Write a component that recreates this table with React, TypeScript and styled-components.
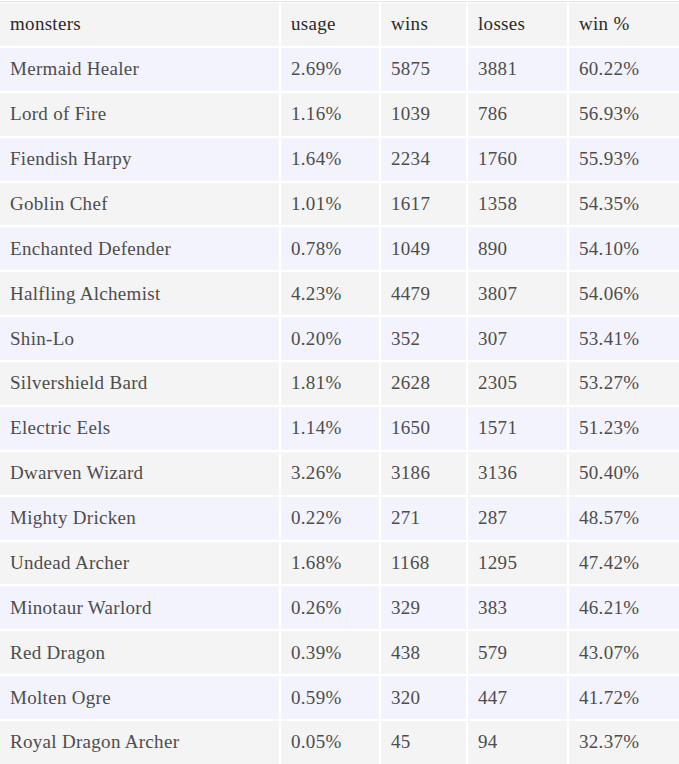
import styled, { createGlobalStyle } from "styled-components";

const GlobalStyle = createGlobalStyle`
  html, body {
    margin: 0;
    padding: 0;
    background: #ffffff;
  }
`;

const Wrapper = styled.div`
  margin-top: 1px;
  border-top: 1px solid #e6e6e6;
  padding-top: 1px;
  width: 679px;
`;

const Table = styled.table`
  width: 679px;
  border-collapse: separate;
  border-spacing: 0;
  table-layout: fixed;
  font-family: "Liberation Serif", "Times New Roman", serif;
  font-size: 19px;
  line-height: 22px;
  letter-spacing: 0.3px;
`;

const Row = styled.tr<{ $alt?: boolean }>`
  background: ${(p) => (p.$alt ? "#f3f3fd" : "#f4f4f4")};
`;

const Cell = styled.td`
  height: 42.875px;
  padding: 0 9px 0 10px;
  border-right: 2px solid #ffffff;
  border-bottom: 2px solid #ffffff;
  color: #4d4d4d;
  text-align: left;
  white-space: nowrap;
  vertical-align: middle;
  &:last-child {
    border-right: none;
  }
`;

const HeadCell = styled(Cell).attrs({ as: "th" })`
  color: #2a2a2a;
  font-weight: normal;
`;

const widths = [281, 100, 87, 101, 110];

type Monster = [string, string, number, number, string];

const monsters: Monster[] = [
  ["Mermaid Healer", "2.69%", 5875, 3881, "60.22%"],
  ["Lord of Fire", "1.16%", 1039, 786, "56.93%"],
  ["Fiendish Harpy", "1.64%", 2234, 1760, "55.93%"],
  ["Goblin Chef", "1.01%", 1617, 1358, "54.35%"],
  ["Enchanted Defender", "0.78%", 1049, 890, "54.10%"],
  ["Halfling Alchemist", "4.23%", 4479, 3807, "54.06%"],
  ["Shin-Lo", "0.20%", 352, 307, "53.41%"],
  ["Silvershield Bard", "1.81%", 2628, 2305, "53.27%"],
  ["Electric Eels", "1.14%", 1650, 1571, "51.23%"],
  ["Dwarven Wizard", "3.26%", 3186, 3136, "50.40%"],
  ["Mighty Dricken", "0.22%", 271, 287, "48.57%"],
  ["Undead Archer", "1.68%", 1168, 1295, "47.42%"],
  ["Minotaur Warlord", "0.26%", 329, 383, "46.21%"],
  ["Red Dragon", "0.39%", 438, 579, "43.07%"],
  ["Molten Ogre", "0.59%", 320, 447, "41.72%"],
  ["Royal Dragon Archer", "0.05%", 45, 94, "32.37%"],
];

const headers = ["monsters", "usage", "wins", "losses", "win %"];

export default function App() {
  return (
    <>
      <GlobalStyle />
      <Wrapper>
        <Table>
          <colgroup>
            {widths.map((w, i) => (
              <col key={i} style={{ width: w }} />
            ))}
          </colgroup>
          <thead>
            <Row>
              {headers.map((h) => (
                <HeadCell key={h}>{h}</HeadCell>
              ))}
            </Row>
          </thead>
          <tbody>
            {monsters.map((m, i) => (
              <Row key={m[0]} $alt={i % 2 === 0}>
                {m.map((v, j) => (
                  <Cell key={j}>{v}</Cell>
                ))}
              </Row>
            ))}
          </tbody>
        </Table>
      </Wrapper>
    </>
  );
}
